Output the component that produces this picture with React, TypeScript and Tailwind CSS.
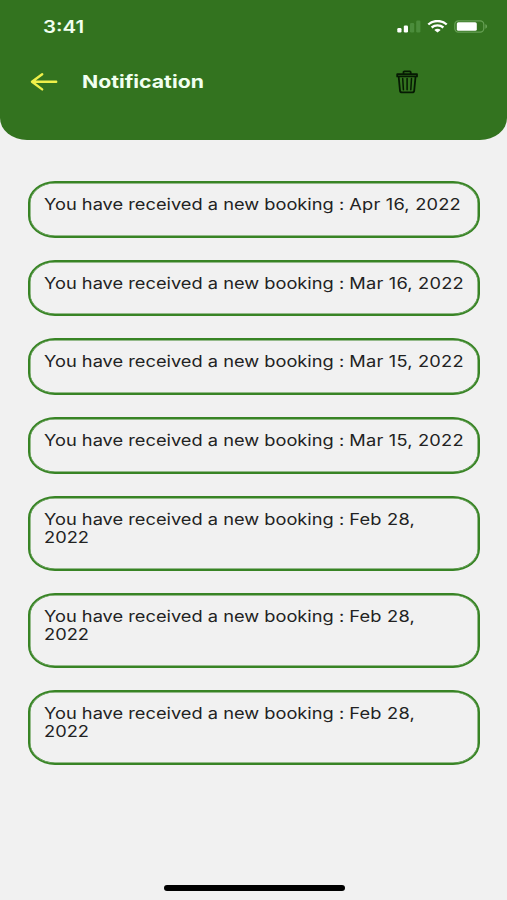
import React from 'react'

type Booking = {
  id: number
  day: string
  year: string
  wrapped?: boolean
}

const BOOKINGS: Booking[] = [
  { id: 1, day: 'Apr 16,', year: '2022' },
  { id: 2, day: 'Mar 16,', year: '2022' },
  { id: 3, day: 'Mar 15,', year: '2022' },
  { id: 4, day: 'Mar 15,', year: '2022' },
  { id: 5, day: 'Feb 28,', year: '2022', wrapped: true },
  { id: 6, day: 'Feb 28,', year: '2022', wrapped: true },
  { id: 7, day: 'Feb 28,', year: '2022', wrapped: true },
]

const StatusBar: React.FC = () => (
  <div className="flex h-[53px] items-center justify-between pl-[43px] pr-[19px]">
    <span className="origin-left scale-x-[1.2] text-[17px] font-semibold leading-[20px] text-[#f1fff0]">3:41</span>
    <div className="flex items-center">
      <svg className="h-[13px] w-[24px]" viewBox="0 0 24 13">
        <rect x="0.3" y="8" width="4.2" height="4.4" rx="1.2" fill="#fff" />
        <rect x="6.8" y="5.6" width="4.2" height="6.8" rx="1.2" fill="#fff" />
        <rect x="13" y="3" width="4.2" height="9.4" rx="1.2" fill="#4b8c3b" />
        <rect x="19.2" y="0.6" width="4.2" height="11.8" rx="1.2" fill="#4b8c3b" />
      </svg>
      <svg className="ml-[6px] h-[13px] w-[21px]" viewBox="0 0 21 13" fill="none" stroke="#fff">
        <path d="M1.3 4.5C6.2-.1 14.8-.1 19.7 4.5" strokeWidth="2.4" />
        <path d="M4.6 7.5c3.3-2.8 8.5-2.8 11.8 0" strokeWidth="2.3" />
        <path d="M10.5 12.6 7.3 9.9c1.8-1.5 4.6-1.5 6.4 0z" fill="#fff" stroke="none" />
      </svg>
      <svg className="ml-[6px] h-[13px] w-[34px]" viewBox="0 0 34 13">
        <rect x="0.8" y="0.8" width="29" height="11.4" rx="3.6" fill="none" stroke="#67a055" strokeWidth="1.2" />
        <rect x="2.8" y="2.2" width="20" height="8.6" rx="1.6" fill="#fff" />
        <path d="M31.3 4.3c2.4.6 2.4 3.8 0 4.4z" fill="#67a055" />
      </svg>
    </div>
  </div>
)

const BackArrow: React.FC = () => (
  <svg
    className="h-[20px] w-[28px]"
    viewBox="0 0 28 20"
    fill="none"
    stroke="#eff04a"
    strokeWidth="2.4"
    strokeLinecap="round"
    strokeLinejoin="round"
  >
    <path d="M12.2 2.2 2 9.8l10.2 7.6M2.6 9.8h23.6" />
  </svg>
)

const TrashIcon: React.FC = () => (
  <svg
    className="h-[24px] w-[23px]"
    viewBox="0 0 23 24"
    fill="none"
    stroke="#061a03"
    strokeWidth="1.8"
    strokeLinecap="round"
    strokeLinejoin="round"
  >
    <path d="M1.2 4.2H21v2.2H1.2zM7.500 4V2.200q0-.9.9-.9h5.400q.9 0 .9.9V4" />
    <path d="M2.700 7 4 20.600q.2 1.800 2 1.800h10.200q1.800 0 2-1.800L19.500 7" />
    <path d="m6.700 8.500.7 11.200M11.100 8.500v11.200M15.500 8.500l-.7 11.200" strokeWidth="1.500" />
  </svg>
)

const NotificationCard: React.FC<{ booking: Booking }> = ({ booking }) => (
  <li
    className={`rounded-[27px/22px] border-2 border-[#388425] pl-[14px] pt-[13px] shadow-[inset_0_0_0_0.5px_#388425] ${
      booking.wrapped ? 'h-[75px]' : 'h-[56.7px]'
    }`}
  >
    <p className="w-[350px] origin-left scale-x-[1.177] whitespace-pre text-[15.5px] leading-[18.7px] text-[#222] [font-feature-settings:'calt'_0]">
      You have received a new booking : <span className="tracking-[0.17px]">{booking.day}</span>
      {booking.wrapped ? (
        <span className="block">{booking.year}</span>
      ) : (
        <span className="tracking-[0.17px]"> {booking.year}</span>
      )}
    </p>
  </li>
)

export default function App() {
  return (
    <div className="flex h-[900px] w-[507px] flex-col overflow-hidden bg-[#f1f1f1] font-['Inter',sans-serif]">
      <header className="h-[140px] shrink-0 rounded-[0_0_27px_27px/0_0_22px_22px] bg-[#33731f]">
        <StatusBar />
        <div className="flex h-[58px] items-center pl-[30px] pr-[88px]">
          <BackArrow />
          <h1 className="ml-[24px] origin-left scale-x-[1.2] text-[17.7px] font-bold leading-[22px] text-[#f1fff0]">
            Notification
          </h1>
          <button type="button" aria-label="Delete notifications" className="ml-auto">
            <TrashIcon />
          </button>
        </div>
      </header>

      <ul className="flex flex-1 flex-col gap-[22px] pl-[28px] pr-[27px] pt-[41px]">
        {BOOKINGS.map((booking) => (
          <NotificationCard key={booking.id} booking={booking} />
        ))}
      </ul>

      <div className="mb-[9px] ml-[164px] h-[6px] w-[181px] shrink-0 rounded-full bg-black" />
    </div>
  )
}
